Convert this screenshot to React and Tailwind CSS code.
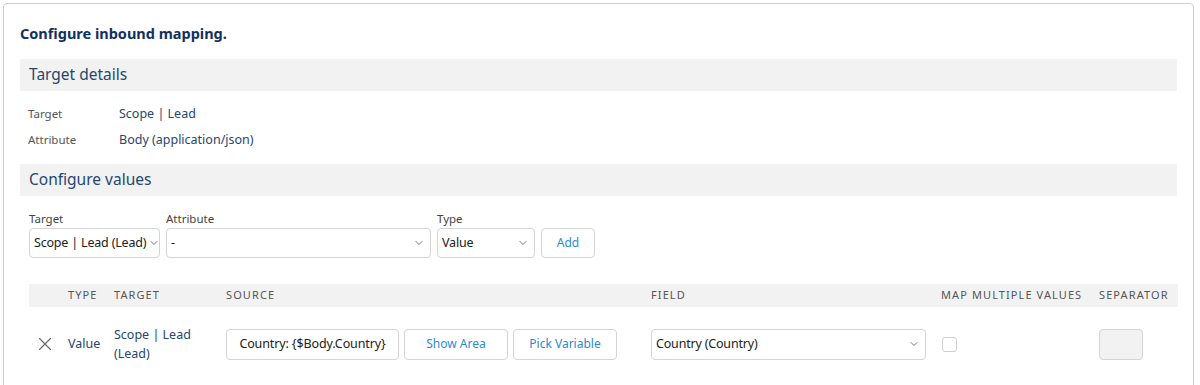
import React from 'react';
import { ChevronDown, X } from 'lucide-react';

const font = { fontFamily: '"Noto Sans", "Open Sans", sans-serif' };

function Select({ value, className }) {
  return (
    <div className={`flex items-center justify-between h-[30px] border border-[#d4d4d4] rounded bg-white pl-[4px] pr-[5px] text-[12.5px] tracking-[-0.015em] text-[#222] ${className}`}>
      <span className="whitespace-nowrap">{value}</span>
      <ChevronDown className="w-3 h-3 text-[#444] shrink-0 ml-[2px]" strokeWidth={1.5} />
    </div>
  );
}

function Button({ children, className }) {
  return (
    <button className={`h-[30px] border border-[#d4d4d4] rounded bg-white text-[12px] text-[#2b8ad6] ${className}`}>
      {children}
    </button>
  );
}

export default function App() {
  return (
    <div className="w-[1200px] h-[385px] bg-white overflow-hidden pt-[3px] pl-[3px]" style={font}>
      <div className="w-[1191px] h-[400px] border border-[#cfcfcf] rounded pl-4 pr-4 pt-[16px]">
        <h1 className="text-[14.5px] font-bold text-[#12305f] leading-[26px]">Configure inbound mapping.</h1>

        {/* Target details */}
        <div className="mt-[13px] h-[32px] bg-[#f2f2f2] flex items-center pl-[9px] text-[15.5px] text-[#27466f]">Target details</div>
        <div className="mt-[14px] flex flex-col gap-[8px] pl-2">
          <div className="flex items-center h-[18px]">
            <span className="w-[91px] text-[11.5px] text-[#555]">Target</span>
            <span className="text-[12.5px] text-[#27466f]">Scope | Lead</span>
          </div>
          <div className="flex items-center h-[18px]">
            <span className="w-[91px] text-[11.5px] text-[#555]">Attribute</span>
            <span className="text-[12.5px] text-[#27466f]">Body (application/json)</span>
          </div>
        </div>

        {/* Configure values */}
        <div className="mt-[15px] h-[32px] bg-[#f2f2f2] flex items-center pl-[9px] text-[15.5px] text-[#27466f]">Configure values</div>

        <div className="mt-[14px] pl-[9px] flex items-end gap-[6px]">
          <div className="flex flex-col">
            <span className="text-[11.5px] text-[#444] leading-[17px] mb-[1px]">Target</span>
            <Select value="Scope | Lead (Lead)" className="w-[131px]" />
          </div>
          <div className="flex flex-col">
            <span className="text-[11.5px] text-[#444] leading-[17px] mb-[1px]">Attribute</span>
            <Select value="-" className="w-[265px]" />
          </div>
          <div className="flex flex-col">
            <span className="text-[11.5px] text-[#444] leading-[17px] mb-[1px]">Type</span>
            <Select value="Value" className="w-[98px]" />
          </div>
          <Button className="w-[54px]">Add</Button>
        </div>

        {/* Mapping table */}
        <div className="mt-[26px] ml-[9px] w-[1149px]">
          <div className="h-[23px] bg-[#f2f2f2] flex items-center text-[11px] tracking-[0.1em] text-[#555]">
            <span className="w-[39px]" />
            <span className="w-[46px]">TYPE</span>
            <span className="w-[112px]">TARGET</span>
            <span className="w-[425px]">SOURCE</span>
            <span className="w-[290px]">FIELD</span>
            <span className="w-[158px]">MAP MULTIPLE VALUES</span>
            <span>SEPARATOR</span>
          </div>
          <div className="flex items-center h-[74px] text-[12.5px]">
            <span className="w-[39px] flex justify-center pr-[7px]">
              <X className="w-[22px] h-[22px] text-[#666]" strokeWidth={1.2} />
            </span>
            <span className="w-[46px] text-[#27466f]">Value</span>
            <span className="w-[112px] text-[#27466f] leading-[19px]">Scope | Lead<br />(Lead)</span>
            <div className="w-[425px] flex gap-[5px]">
              <div className="w-[173px] h-[31px] border border-[#d4d4d4] rounded flex items-center justify-center text-[12.5px] tracking-[-0.01em] text-[#222]">
                Country: {'{'}$Body.Country{'}'}
              </div>
              <Button className="w-[104px] h-[31px]">Show Area</Button>
              <Button className="w-[104px] h-[31px]">Pick Variable</Button>
            </div>
            <div className="w-[290px]">
              <Select value="Country (Country)" className="w-[275px] h-[31px]" />
            </div>
            <div className="w-[158px] pl-[1px]">
              <div className="w-[15px] h-[15px] border border-[#cfcfcf] rounded-[3px] bg-white" />
            </div>
            <div className="w-[44px] h-[31px] border border-[#d4d4d4] rounded bg-[#f2f2f2]" />
          </div>
        </div>
      </div>
    </div>
  );
}
